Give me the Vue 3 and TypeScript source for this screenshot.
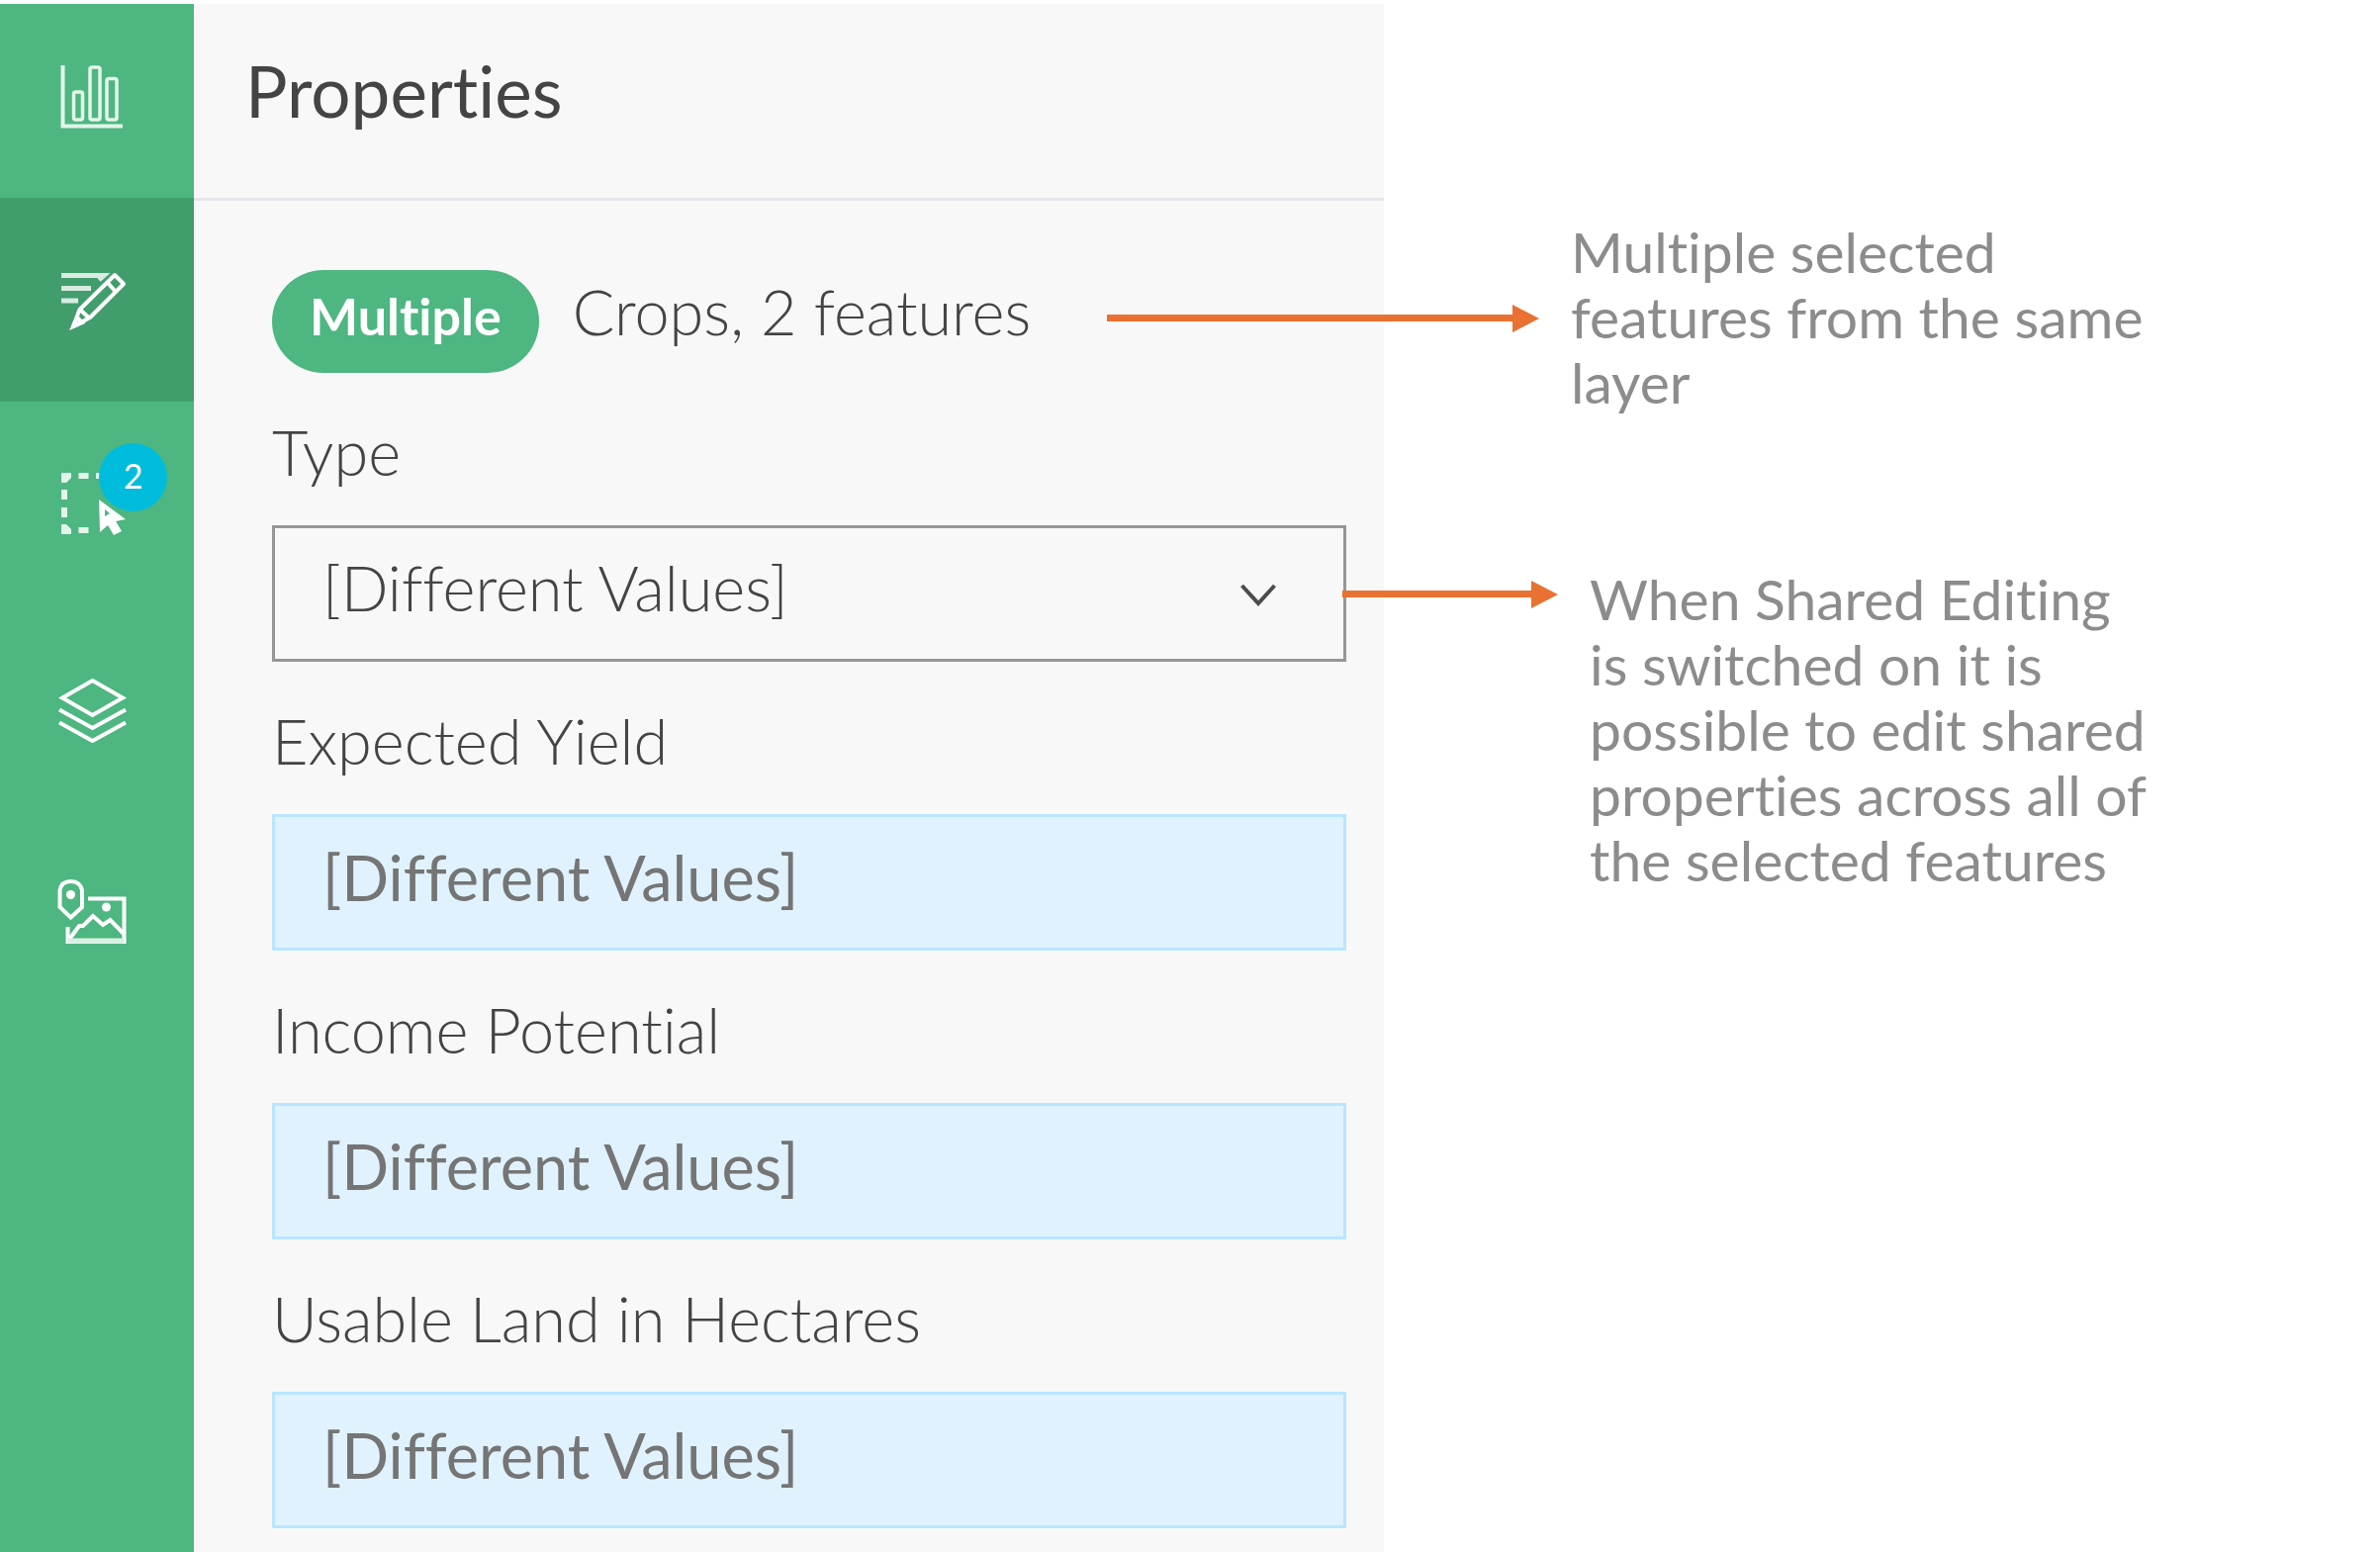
<script setup lang="ts">
import { ref } from 'vue'

interface Field {
  id: string
  label: string
}

const mixedValue = '[Different Values]'
const cropType = ref<string>(mixedValue)
const selectedCount = 2

const fields: Field[] = [
  { id: 'expected-yield', label: 'Expected Yield' },
  { id: 'income-potential', label: 'Income Potential' },
  { id: 'usable-land', label: 'Usable Land in Hectares' },
]
const values = ref<Record<string, string>>({})
</script>

<template>
  <div class="page">
    <nav class="sidebar" aria-label="Tools">
      <button class="tool tool-first" type="button" aria-label="Charts">
        <svg class="icon" viewBox="0 0 72 72" fill="none" stroke="#e3f5ea" stroke-width="3.5">
          <path d="M5.5 4V65.5H66" stroke-width="4" />
          <rect x="16.5" y="31" width="9" height="28" rx="2" />
          <rect x="33" y="6" width="10" height="53" rx="2" />
          <rect x="50" y="17.500" width="10" height="41.500" rx="2" />
        </svg>
      </button>
      <button class="tool active" type="button" aria-label="Properties">
        <svg class="icon" viewBox="0 0 72 72" fill="none" stroke="#fff" stroke-width="4">
          <path d="M4 11.500H47L42 16M4 24.500H34M4 37H21" stroke="#d9ebe2" stroke-width="5" />
          <path d="M16 63L22.500 46L58 11L67 20L33 54Z" stroke-linejoin="round" />
          <path d="M51 19L59 28M23 46L32 54.500M16 63L20 54L25 59Z" />
        </svg>
      </button>
      <button class="tool" type="button" aria-label="Selection">
        <svg class="icon" viewBox="0 0 72 72">
          <g fill="#e3f5ea">
            <path d="M4 5H14V10L9 15H4ZM21.500 5H31.500V11H21.500ZM39 5H45V11H39ZM4 22H10V32H4ZM4 40H10V50H4ZM4 57H9L14 62V67H4ZM21.500 60H31.500V66H21.500Z" />
          </g>
          <path fill="#fff" fill-rule="evenodd" d="M42 32L69 52L59 54L65 64L57 68L51 58L43 65ZM48 42V49L53 46Z" />
        </svg>
        <span class="count">{{ selectedCount }}</span>
      </button>
      <button class="tool" type="button" aria-label="Layers">
        <svg class="icon" viewBox="0 -3 72 72" fill="none" stroke="#fff" stroke-width="4">
          <path d="M35.500 6L66 23.500L35.500 41L5 23.500Z" />
          <path d="M2 35.500L35.500 54L69 35.500M2 48.500L35.500 67L69 48.500" />
        </svg>
      </button>
      <button class="tool" type="button" aria-label="Map images">
        <svg class="icon" viewBox="0 -1 72 72" fill="none" stroke="#fff" stroke-width="4">
          <path d="M13.500 41.500L2.500 31V14Q4 5 13.500 5T25 14V31Z" />
          <path d="M31 22.500H67.500V66H10.500V51" />
          <path d="M11 65L22 50H26L36 40L46 49L53.500 44L67 58" />
          <path d="M11 65H67" stroke="#d9f0e3" stroke-width="5" />
          <circle cx="13.500" cy="18.500" r="4.500" fill="#fff" stroke="none" />
          <circle cx="49.500" cy="31" r="4.500" fill="#fff" stroke="none" />
        </svg>
      </button>
    </nav>

    <main class="panel">
      <header class="panel-header">
        <h1>Properties</h1>
      </header>
      <form class="panel-body" @submit.prevent>
        <div class="summary">
          <span class="pill">Multiple</span>
          <span class="summary-text">Crops, 2 features</span>
        </div>

        <div class="field">
          <label for="type">Type</label>
          <div class="select-wrap">
            <select id="type" v-model="cropType" class="control">
              <option :value="mixedValue">{{ mixedValue }}</option>
            </select>
            <svg class="chevron" viewBox="0 0 36 24" fill="none" stroke="#4c4c4c" stroke-width="4">
              <path d="M1.500 2L18 20L34.500 2" />
            </svg>
          </div>
        </div>

        <div v-for="field in fields" :key="field.id" class="field">
          <label :for="field.id">{{ field.label }}</label>
          <input
            :id="field.id"
            v-model="values[field.id]"
            class="control shared"
            type="text"
            :placeholder="mixedValue"
          />
        </div>
      </form>
    </main>

    <aside class="notes">
      <p class="note">
        <span class="arrow arrow-long"></span>
        Multiple selected<br />features from the same<br />layer
      </p>
      <p class="note note-second">
        <span class="arrow"></span>
        When Shared Editing<br />is switched on it is<br />possible to edit shared<br />properties across all of<br />the selected features
      </p>
    </aside>
  </div>
</template>

<style>
body {
  background: #fff;
}
</style>

<style scoped>
.page {
  display: flex;
  box-sizing: border-box;
  min-height: 100vh;
  padding-top: 4px;
  font-family: Lato, "Open Sans", sans-serif;
  font-weight: 300;
  font-variant-ligatures: none;
  color: #444;
}

.page * {
  box-sizing: border-box;
}

.sidebar {
  flex: none;
  width: 196px;
  background: #4db681;
}

.tool {
  position: relative;
  display: flex;
  align-items: center;
  justify-content: center;
  width: 100%;
  height: 206px;
  padding: 0 8px 0 0;
  border: 0;
  background: none;
}

.tool-first {
  height: 196px;
  padding-bottom: 8px;
}

.tool.active {
  background: #429d6d;
}

.icon {
  width: 72px;
  height: 72px;
}

.count {
  position: absolute;
  top: 42px;
  left: 100px;
  width: 69px;
  height: 69px;
  border-radius: 50%;
  background: #00bcdc;
  color: #fff;
  font: 400 34px/66px Lato, sans-serif;
  text-align: center;
}

.panel {
  flex: none;
  width: 50%;
  background: #f8f8f8;
}

.panel-header {
  height: 199px;
  padding: 48px 52px 0;
  border-bottom: 3px solid #e5e6ea;
}

h1 {
  margin: 0;
  font-size: 71px;
  font-weight: 400;
  line-height: 80px;
}

.panel-body {
  display: flex;
  flex-direction: column;
  gap: 44px;
  padding: 70px 38px 20px 79px;
}

.summary {
  display: flex;
  gap: 34px;
}

.pill {
  height: 104px;
  padding: 0 38px;
  border-radius: 52px;
  background: #4db681;
  color: #fff;
  font-size: 52px;
  font-weight: 700;
  line-height: 92px;
}

.summary-text {
  font-size: 63px;
  line-height: 84px;
}

.field {
  display: flex;
  flex-direction: column;
  gap: 38px;
}

label {
  font-size: 63px;
  line-height: 72px;
}

.select-wrap {
  position: relative;
  display: flex;
}

.control {
  appearance: none;
  width: 100%;
  height: 138px;
  padding: 0 48px 12px;
  border: 3px solid #969696;
  border-radius: 0;
  background: transparent;
  color: #444;
  font: 300 63px/72px Lato, sans-serif;
  font-variant-ligatures: none;
}

.shared {
  border-color: #b9e6fe;
  background: #e0f2fe;
  font-weight: 400;
}

.shared::placeholder {
  color: #757575;
}

.chevron {
  position: absolute;
  top: 59px;
  right: 71px;
  width: 36px;
  height: 24px;
  pointer-events: none;
}

.notes {
  flex: 1;
  padding: 217px 0 0 189px;
}

.note {
  position: relative;
  margin: 0;
  color: #8c8c8c;
  font-size: 57px;
  font-weight: 400;
  line-height: 66px;
}

.note-second {
  margin: 153px 0 0 19px;
}

.arrow {
  position: absolute;
  top: 15px;
  right: calc(100% + 32px);
  display: flex;
  align-items: center;
  width: 218px;
  height: 27px;
}

.arrow-long {
  top: 87px;
  width: 437px;
}

.arrow::before {
  content: "";
  flex: 1;
  height: 7px;
  background: #e97132;
}

.arrow::after {
  content: "";
  border-left: 27px solid #e97132;
  border-top: 14px solid transparent;
  border-bottom: 14px solid transparent;
}
</style>
